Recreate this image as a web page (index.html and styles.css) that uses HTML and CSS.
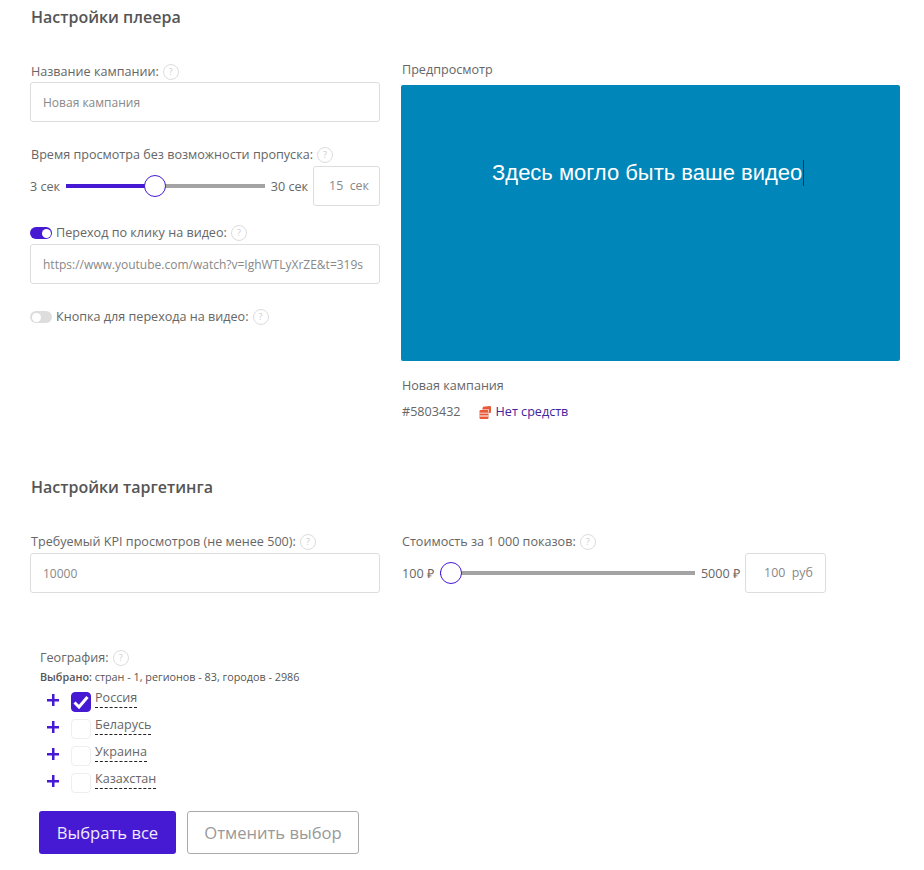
FILE: index.html
```html
<!DOCTYPE html>
<html lang="ru">
<head>
  <meta charset="UTF-8" />
  <meta name="viewport" content="width=device-width, initial-scale=1" />
  <title>Настройки плеера</title>
  <link rel="stylesheet" href="styles.css">
</head>
<body>
  <main class="page">
    <h2 class="section-title">Настройки плеера</h2>

    <section class="player-grid">
      <div class="col-left">
        <div class="label label-name">Название кампании: <span class="hint">?</span></div>
        <div class="field">Новая кампания</div>

        <div class="label label-skip">Время просмотра без возможности пропуска: <span class="hint">?</span></div>
        <div class="slider-row">
          <span>3 сек</span>
          <div class="track"><div class="track-fill" style="width: 44.7%"><span class="thumb"></span></div></div>
          <span>30 сек</span>
          <div class="value-box value-skip">15&nbsp; сек</div>
        </div>

        <div class="label label-toggle">
          <span class="toggle on"></span>Переход по клику на видео: <span class="hint">?</span>
        </div>
        <div class="field">https://www.youtube.com/watch?v=IghWTLyXrZE&amp;t=319s</div>

        <div class="label label-button">
          <span class="toggle"></span>Кнопка для перехода на видео: <span class="hint">?</span>
        </div>
      </div>

      <div class="col-right">
        <div class="preview-title">Предпросмотр</div>
        <div class="video">
          <span class="video-text">Здесь могло быть ваше видео</span>
        </div>
        <div class="campaign-name">Новая кампания</div>
        <div class="campaign-meta">
          <span>#5803432</span>
          <a href="#" class="funds">
            <svg class="funds-icon" width="12" height="13" viewBox="0 0 12 13">
              <path fill="#e8593a" d="M4 .8L11 0q1 0 1 1v5q0 1-1 1h-1V3.5L3.2 3.5z"/>
              <path fill="#e8593a" d="M1.5 4h7q1 0 1 1v7q0 1-1 1h-7q-1 0-1-1V5q0-1 1-1z"/>
              <path fill="#fff" d="M.5 6.8h9v.8h-9zM.5 9.6h9v.8h-9z"/>
            </svg>
            Нет средств
          </a>
        </div>
      </div>
    </section>

    <h2 class="section-title">Настройки таргетинга</h2>

    <section class="target-grid">
      <div class="col-left">
        <div class="label label-kpi">Требуемый KPI просмотров (не менее 500): <span class="hint">?</span></div>
        <div class="field">10000</div>
      </div>
      <div class="col-cost">
        <div class="label">Стоимость за 1 000 показов: <span class="hint">?</span></div>
        <div class="slider-row">
          <span>100 ₽</span>
          <div class="track"><div class="track-fill" style="width: 4.3%"><span class="thumb"></span></div></div>
          <span>5000 ₽</span>
          <div class="value-box value-cost">100&nbsp; руб</div>
        </div>
      </div>
    </section>

    <section class="geo">
      <div class="label">География: <span class="hint">?</span></div>
      <div class="geo-summary"><b>Выбрано:</b> стран - 1, регионов - 83, городов - 2986</div>

      <ul class="geo-list">
        <li class="geo-item">
          <span class="plus"></span>
          <span class="check checked">
            <svg width="16" height="14" viewBox="0 0 16 14"><path d="M1.5 7.5l4.5 4.5 8.5-10" fill="none" stroke="#fff" stroke-width="3"/></svg>
          </span>
          <span class="geo-name">Россия</span>
        </li>
        <li class="geo-item"><span class="plus"></span><span class="check"></span><span class="geo-name">Беларусь</span></li>
        <li class="geo-item"><span class="plus"></span><span class="check"></span><span class="geo-name">Украина</span></li>
        <li class="geo-item"><span class="plus"></span><span class="check"></span><span class="geo-name">Казахстан</span></li>
      </ul>

      <div class="geo-buttons">
        <button class="btn btn-primary">Выбрать все</button>
        <button class="btn btn-outline">Отменить выбор</button>
      </div>
    </section>
  </main>
</body>
</html>
```

FILE: styles.css
```css
* {
  box-sizing: border-box;
}

body {
  margin: 0;
  background: #fff;
  color: #666;
  font-family: "Open Sans", sans-serif;
  font-size: 12.6px;
}

.page {
  padding: 7px 0 0 30px;
  width: 924px;
  height: 870px;
  overflow: hidden;
}

.section-title {
  margin: 0;
  padding-left: 1px;
  height: 20px;
  line-height: 20px;
  font-size: 16px;
  font-weight: 600;
  color: #555;
}

.player-grid {
  display: grid;
  grid-template-columns: 350px 499px;
  column-gap: 21px;
  margin-top: 35px;
  height: 415px;
}

.target-grid {
  display: flex;
  gap: 22px;
  margin-top: 36px;
}

.col-left {
  width: 350px;
}

.col-cost {
  width: 424px;
}

.label {
  display: flex;
  align-items: center;
  gap: 4px;
  height: 18px;
  line-height: 18px;
  margin-bottom: 2px;
  color: #666;
  white-space: nowrap;
}

.label-name {
  padding-top: 2px;
}

.label-skip {
  margin-top: 24px;
}

.label-name,
.label-skip,
.label-kpi {
  padding-left: 1px;
}

.label-toggle {
  margin-top: 17px;
  margin-bottom: 3px;
  padding-top: 2px;
}

.label-button {
  margin-top: 23px;
  padding-top: 2px;
}

.hint {
  width: 16px;
  height: 16px;
  border: 1px solid #ddd;
  border-radius: 50%;
  font-size: 9px;
  line-height: 14px;
  text-align: center;
  color: #ccc;
}

.field {
  height: 40px;
  padding: 0 12px;
  line-height: 40px;
  border: 1px solid #ddd;
  border-radius: 3px;
  font-size: 12px;
  color: #888;
  white-space: nowrap;
  overflow: hidden;
}

.slider-row {
  display: flex;
  align-items: center;
  gap: 5px;
  height: 40px;
  white-space: nowrap;
}

.track {
  flex: 1;
  height: 4px;
  margin: 0 1px;
  background: #a3a3a3;
}

.track-fill {
  position: relative;
  height: 4px;
  background: #4619d3;
}

.thumb {
  position: absolute;
  top: -9px;
  right: -11px;
  width: 22px;
  height: 22px;
  background: #fff;
  border: 1.5px solid #4619d3;
  border-radius: 50%;
}

.value-box {
  height: 40px;
  line-height: 38px;
  border: 1px solid #ddd;
  border-radius: 3px;
  text-align: center;
  font-size: 12.4px;
  color: #888;
}

.value-skip {
  width: 67px;
  padding-left: 5px;
}

.value-cost {
  width: 81px;
  padding-left: 6px;
}

.toggle {
  position: relative;
  display: inline-block;
  width: 22px;
  height: 12px;
  border-radius: 6px;
  background: #ddd;
}

.toggle::after {
  content: "";
  position: absolute;
  top: 1.5px;
  left: 2px;
  width: 9px;
  height: 9px;
  border-radius: 50%;
  background: #fff;
}

.toggle.on {
  background: #4619d3;
}

.toggle.on::after {
  left: 11.5px;
}

.preview-title {
  height: 18px;
  line-height: 18px;
  padding-left: 1px;
  margin-bottom: 6px;
  margin-top: -1px;
}

.video {
  height: 276px;
  padding-top: 75px;
  padding-left: 91px;
  background: #0086b8;
  border-radius: 2px;
}

.video-text {
  display: inline-block;
  height: 26px;
  line-height: 26px;
  padding-right: 1px;
  border-right: 1px solid #06364f;
  font-family: "Liberation Sans", sans-serif;
  font-size: 22px;
  color: #fff;
}

.campaign-name {
  margin-top: 16px;
  padding-left: 1px;
  height: 18px;
  line-height: 18px;
}

.campaign-meta {
  display: flex;
  gap: 18px;
  margin-top: 8px;
  padding-left: 1px;
  line-height: 18px;
}

.funds {
  display: flex;
  align-items: center;
  gap: 5px;
  color: #43249c;
  text-decoration: none;
}

.geo {
  margin-top: 56px;
  padding-left: 10px;
}

.geo-summary {
  height: 16px;
  line-height: 16px;
  font-size: 10.8px;
  color: #555;
}

.geo-summary b {
  font-weight: 600;
}

.geo-list {
  list-style: none;
  margin: 5px 0 0;
  padding: 0 0 0 7px;
}

.geo-item {
  display: flex;
  align-items: flex-start;
  height: 27px;
}

/* плюс рисуем фоном, чтобы не было лишнего текста */
.plus {
  width: 12px;
  height: 12px;
  margin: 4px 12px 0 0;
  background:
    linear-gradient(#4619d3, #4619d3) center / 12px 2.5px no-repeat,
    linear-gradient(#4619d3, #4619d3) center / 2.5px 12px no-repeat;
}

.check {
  display: flex;
  align-items: center;
  justify-content: center;
  width: 20px;
  height: 20px;
  margin: 2px 4px 0 0;
  border: 1px solid #eee;
  border-radius: 4px;
}

.check.checked {
  background: #4619d3;
  border-color: #4619d3;
}

.geo-name {
  height: 18px;
  line-height: 16px;
  border-bottom: 1px dashed #222;
}

.geo-buttons {
  display: flex;
  gap: 11px;
  margin-top: 13px;
  margin-left: -1px;
}

.btn {
  height: 43px;
  border-radius: 3px;
  font-family: "Open Sans", sans-serif;
  font-size: 16.6px;
  cursor: pointer;
}

.btn-primary {
  width: 137px;
  background: #4619d3;
  border: 0;
  color: #f0eafc;
}

.btn-outline {
  width: 172px;
  background: #fff;
  border: 1px solid #aaa;
  color: #999;
}
```
